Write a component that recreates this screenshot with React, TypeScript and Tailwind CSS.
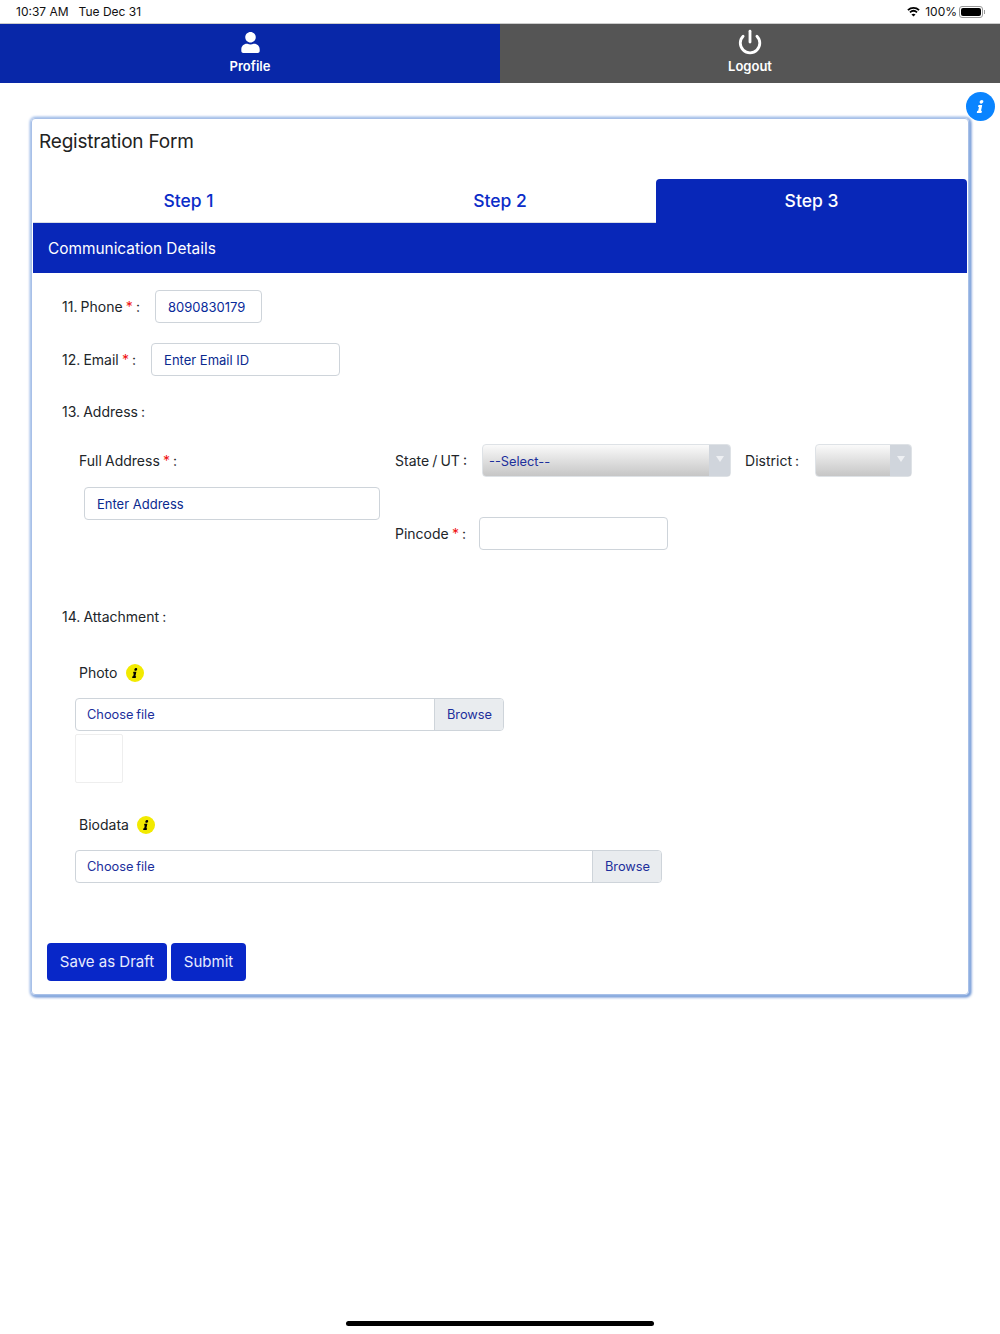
import { Power } from 'lucide-react'
import { FaInfo, FaUser } from 'react-icons/fa'

const fieldClass =
  'h-[33px] rounded-[4px] border border-[#ced4da] bg-white px-3 text-[13px] text-[#0a2a9a] placeholder:text-[#0a2a8f] outline-none'

const Required = () => <span className="text-[#f01010]">*</span>

const InfoDot = ({ className }: { className: string }) => (
  <span className={`flex h-[18px] w-[18px] items-center justify-center rounded-full bg-[#f2ea00] text-black ${className}`}>
    <FaInfo className="h-[10px] w-[10px] -skew-x-12" />
  </span>
)

const Dropdown = ({ text, className }: { text?: string; className: string }) => (
  <div
    className={`flex h-[33px] items-stretch overflow-hidden rounded-[4px] border border-[#dee2e6] bg-gradient-to-b from-[#fafafa] to-[#c6c6c6] ${className}`}
  >
    <span className="flex-1 pl-[6px] pt-[1px] text-[12.8px] leading-[31px] text-[#1c2f9c]">{text}</span>
    <span className="flex w-[21px] justify-center bg-[#d0d5dc] pt-[11px]">
      <span className="h-0 w-0 border-x-[4px] border-t-[6px] border-x-transparent border-t-[#eef0f3]" />
    </span>
  </div>
)

const FileInput = ({ className }: { className: string }) => (
  <div
    className={`ml-[13px] flex h-[33px] overflow-hidden rounded-[4px] border border-[#ced4da] text-[12.8px] text-[#1c2f9c] ${className}`}
  >
    <span className="flex-1 pl-[11px] leading-[31px]">Choose file</span>
    <span className="w-[69px] border-l border-[#ced4da] bg-[#e9ecef] pl-[1px] text-center leading-[31px]">Browse</span>
  </div>
)

export default function App() {
  return (
    <div className="relative h-[1334px] w-[1000px] overflow-hidden bg-white font-['Inter','Liberation_Sans',sans-serif] text-[14px] text-[#212529]">
      {/* status bar */}
      <div className="flex h-6 items-center justify-between border-b border-[#cccccc] pl-4 pr-[15px] text-[12px] text-[#111]">
        <div className="flex gap-[10px]">
          <span>10:37 AM</span>
          <span>Tue Dec 31</span>
        </div>
        <div className="flex items-center">
          <svg width="13" height="11" viewBox="0 0 14 11" fill="none" stroke="black" strokeWidth="2">
            <path d="M1 4 C4.5 .8 9.5 .8 13 4" />
            <path d="M3.2 6.4 C5.5 4.4 8.5 4.4 10.8 6.4" />
            <path d="M7 11 L4.8 8.6 C6 7.6 8 7.6 9.2 8.6 Z" fill="black" stroke="none" />
          </svg>
          <span className="ml-[5px]">100%</span>
          <div className="ml-[2px] flex items-center">
            <div className="h-[12px] w-[24px] rounded-[3px] border border-[#999] p-[1px]">
              <div className="h-full w-full rounded-[2px] bg-black" />
            </div>
            <div className="ml-[1px] h-[4px] w-[1px] bg-[#999]" />
          </div>
        </div>
      </div>

      {/* top nav */}
      <div className="flex h-[59px] text-white">
        <div className="flex w-1/2 flex-col items-center bg-[#0827a8] pt-2">
          <FaUser className="h-[21px] w-[21px]" />
          <span className="mt-1 text-[13px] font-semibold">Profile</span>
        </div>
        <div className="flex w-1/2 flex-col items-center bg-[#555555] pt-[5px]">
          <Power className="h-[26px] w-[26px]" strokeWidth={2.6} />
          <span className="mt-[2px] text-[13px] font-semibold">Logout</span>
        </div>
      </div>

      <div className="absolute left-[966px] top-[92px] z-10 flex h-[29px] w-[29px] items-center justify-center rounded-full bg-[#0a84ff] text-white">
        <FaInfo className="h-[13px] w-[13px] -skew-x-12" />
      </div>

      {/* card */}
      <div className="ml-[31px] mt-[35px] h-[877px] w-[938px] rounded-[4px] border border-[#a8c0e8] shadow-[0_0_3px_1px_#b4ccf0,1px_1px_3px_1px_#2f65bd]">
        <div className="pl-[7px] pt-[10px] text-[19px] leading-[26px] tracking-[-0.2px] text-[#222]">Registration Form</div>

        <div className="mx-[1px] mt-6 flex h-11 text-[17.5px] font-medium">
          <div className="flex w-[311px] items-center justify-center border-b border-[#d8dde6] pt-[1px] text-[#0a2cc8]">Step 1</div>
          <div className="flex w-[312px] items-center justify-center border-b border-[#d8dde6] pt-[1px] text-[#0a2cc8]">Step 2</div>
          <div className="flex w-[311px] items-center justify-center rounded-t-[4px] bg-[#0827b8] pt-[1px] text-white">Step 3</div>
        </div>
        <div className="mx-[1px] flex h-[50px] items-center bg-[#0827b8] pl-[15px] pt-[1px] text-[15.4px] text-white">
          Communication Details
        </div>

        {/* form */}
        <div className="pl-[30px] pt-[17px] [word-spacing:-0.8px]">
          <div className="flex items-center">
            <span>
              11. Phone <Required /> :
            </span>
            <input className={`${fieldClass} ml-[15px] w-[107px]`} defaultValue="8090830179" />
          </div>
          <div className="mt-5 flex items-center">
            <span>
              12. Email <Required /> :
            </span>
            <input className={`${fieldClass} ml-[15px] w-[189px]`} placeholder="Enter Email ID" />
          </div>
          <div className="mt-[26px] leading-[20px]">13. Address :</div>

          <div className="mt-[22px] flex">
            <div className="w-[333px] pl-[17px]">
              <div className="flex h-[33px] items-center">
                <span>
                  Full Address <Required /> :
                </span>
              </div>
              <input className={`${fieldClass} ml-[5px] mt-[10px] w-[296px]`} placeholder="Enter Address" />
            </div>
            <div>
              <div className="flex items-center">
                <span>State / UT :</span>
                <Dropdown text="--Select--" className="ml-[15px] w-[249px]" />
                <span className="ml-[14px]">District :</span>
                <Dropdown className="ml-[16px] w-[97px]" />
              </div>
              <div className="mt-10 flex items-center">
                <span>
                  Pincode <Required /> :
                </span>
                <input className={`${fieldClass} ml-[13px] w-[189px]`} />
              </div>
            </div>
          </div>

          <div className="mt-[57px] leading-[20px]">14. Attachment :</div>

          <div className="mt-[36px] flex h-5 items-center pl-[17px]">
            <span className="-mt-px">Photo</span>
            <InfoDot className="ml-[9px]" />
          </div>
          <FileInput className="mt-[15px] w-[429px]" />
          <div className="ml-[13px] mt-[3px] h-[49px] w-[48px] rounded-[2px] border border-[#eeeeee]" />

          <div className="mt-[32px] flex h-5 items-center pl-[17px]">
            <span className="-mt-px">Biodata</span>
            <InfoDot className="ml-2" />
          </div>
          <FileInput className="mt-[15px] w-[587px]" />
        </div>

        <div className="ml-[15px] mt-[60px] flex gap-1 text-[15px] text-[#e8ecff]">
          <button className="h-[38px] w-[120px] rounded-[4px] bg-[#0827c8] pt-[1px]">Save as Draft</button>
          <button className="h-[38px] w-[75px] rounded-[4px] bg-[#0827c8] pt-[1px]">Submit</button>
        </div>
      </div>

      {/* home indicator */}
      <div className="absolute left-[346px] top-[1321px] h-[5px] w-[308px] rounded-full bg-black" />
    </div>
  )
}
